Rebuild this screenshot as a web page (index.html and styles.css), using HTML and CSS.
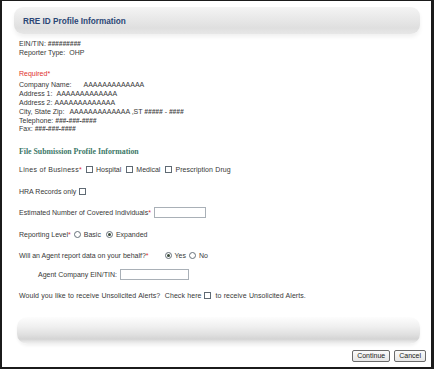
FILE: index.html
```html
<!DOCTYPE html>
<html>
<head>
<meta charset="utf-8">
<link rel="stylesheet" href="styles.css">
</head>
<body>
<div class="frame">
  <div class="hdr"><span class="hdr-title">RRE ID Profile Information</span></div>

  <div class="content">
    <div class="info">
      <div class="line">EIN/TIN: <span class="hash">#########</span></div>
      <div class="line">Reporter Type:<span class="val g3">OHP</span></div>
    </div>

    <div class="req">Required<span class="ast">*</span></div>
    <div class="info">
      <div class="line">Company Name:<span class="val g12">AAAAAAAAAAAAA</span></div>
      <div class="line">Address 1:<span class="val g3">AAAAAAAAAAAAA</span></div>
      <div class="line">Address 2:<span class="val g2">AAAAAAAAAAAAA</span></div>
      <div class="line">City, State Zip:<span class="val g4">AAAAAAAAAAAAA</span> ,ST <span class="hash">#####</span> - <span class="hash">####</span></div>
      <div class="line">Telephone:<span class="val g2 hash">###-###-####</span></div>
      <div class="line">Fax:<span class="val g2 hash">###-###-####</span></div>
    </div>

    <div class="sec-title">File Submission Profile Information</div>

    <div class="row r-lob">
      <span class="lob-label">Lines of Business<span class="ast">*</span></span>
      <span class="opt o4"><span class="cb"></span>Hospital</span>
      <span class="opt o5"><span class="cb"></span>Medical</span>
      <span class="opt o5"><span class="cb"></span><span class="wide">Prescription Drug</span></span>
    </div>

    <div class="row r-std">
      <span>HRA Records only</span>
      <span class="opt o3"><span class="cb"></span></span>
    </div>

    <div class="row r-std">
      <span>Estimated Number of Covered Individuals<span class="ast">*</span></span>
      <span class="tbox tb-est"></span>
    </div>

    <div class="row r-std">
      <span>Reporting Level<span class="ast">*</span></span>
      <span class="opt o3"><span class="rb"></span>Basic</span>
      <span class="opt o5"><span class="rb on"></span>Expanded</span>
    </div>

    <div class="row r-std">
      <span>Will an Agent report data on your behalf?<span class="ast">*</span></span>
      <span class="opt o16"><span class="rb on"></span>Yes</span>
      <span class="opt o3"><span class="rb"></span>No</span>
    </div>

    <div class="row r-agent">
      <span>Agent Company EIN/TIN:</span>
      <span class="tbox tb-agent"></span>
    </div>

    <div class="row r-alert">
      <span class="wide">Would you like to receive Unsolicited Alerts?&nbsp; Check here</span>
      <span class="opt o3"><span class="cb"></span></span>
      <span class="after wide">to receive Unsolicited Alerts.</span>
    </div>
  </div>

  <div class="foot-bar"></div>

  <div class="buttons">
    <span class="btn">Continue</span>
    <span class="btn">Cancel</span>
  </div>
</div>
</body>
</html>
```

FILE: styles.css
```css
html, body {
  margin: 0;
  padding: 0;
  background: #ffffff;
}

.frame {
  box-sizing: border-box;
  width: 434px;
  height: 369px;
  border-style: solid;
  border-color: #1b1b1b;
  border-width: 1px 3px 2px 2px;
  padding-top: 6px;
  font-family: "Liberation Sans", Arial, sans-serif;
  font-size: 7px;
  color: #383838;
  background: #fff;
  display: flex;
  flex-direction: column;
}

.hdr {
  height: 27px;
  margin: 0 11px 0 12px;
  border-radius: 9px;
  background: linear-gradient(to bottom, #f4f4f4 0%, #e8e8e8 45%, #dfdfdf 78%, #e7e7e7 100%);
  box-shadow: 0 3px 4px rgba(0, 0, 0, 0.06);
  display: flex;
  align-items: center;
  padding-left: 9px;
  padding-top: 1px;
  box-sizing: border-box;
}

.hdr-title {
  font-weight: bold;
  font-size: 8.2px;
  color: #2b4675;
}

.content {
  padding-left: 17px;
}

.info {
  margin-top: 6px;
}

.line {
  height: 8.8px;
  line-height: 8.8px;
  white-space: nowrap;
}

.val.g2 { margin-left: 2px; }
.val.g3 { margin-left: 4px; }
.val.g4 { margin-left: 5px; }
.val.g12 { margin-left: 12px; }

.hash {
  font-weight: bold;
  font-style: italic;
  font-size: 6.6px;
  color: #444;
}

.req {
  margin-top: 12px;
  height: 8.8px;
  line-height: 8.8px;
  color: #e0302c;
}

.req + .info {
  margin-top: 3px;
}

.ast {
  color: #e0302c;
}

.sec-title {
  margin-top: 13px;
  height: 10px;
  line-height: 10px;
  font-family: "Liberation Serif", "Times New Roman", serif;
  font-weight: bold;
  font-size: 7.8px;
  color: #3c7868;
}

.row {
  display: flex;
  align-items: center;
  height: 12px;
  white-space: nowrap;
}

.lob-label { letter-spacing: 0.3px; }
.wide { letter-spacing: 0.05px; word-spacing: 0.3px; }

.r-lob { margin-top: 6.5px; }
.r-std { margin-top: 9.5px; }
.r-agent { margin-top: 7px; padding-left: 19px; }
.r-alert { margin-top: 9px; }

.opt {
  display: inline-flex;
  align-items: center;
  gap: 3px;
}

.o3 { margin-left: 3px; }
.o4 { margin-left: 4px; }
.o5 { margin-left: 5px; }
.o16 { margin-left: 16px; }

.cb {
  box-sizing: border-box;
  display: inline-block;
  width: 7px;
  height: 7px;
  border: 1px solid #5f6a74;
  background: #fff;
}

.rb {
  box-sizing: border-box;
  display: inline-flex;
  align-items: center;
  justify-content: center;
  width: 7px;
  height: 7px;
  border: 1px solid #66707a;
  border-radius: 50%;
  background: #fff;
}

.rb.on::after {
  content: "";
  width: 3px;
  height: 3px;
  border-radius: 50%;
  background: #3a4a3a;
}

.tbox {
  box-sizing: border-box;
  display: inline-block;
  height: 11px;
  border: 1px solid #a9b0b7;
  background: #fff;
  margin-left: 3px;
}

.tb-est { width: 52px; }
.tb-agent { width: 69px; }

.after {
  margin-left: 4px;
}

.foot-bar {
  margin: 15px 11px 0 15px;
  height: 27px;
  border-radius: 10px;
  background: linear-gradient(to bottom, #fdfdfd 0%, #f0f0f0 35%, #e0e0e0 65%, #d4d4d4 82%, #e4e4e4 90%, #f3f3f3 100%);
  box-shadow: 0 2px 3px rgba(0, 0, 0, 0.05);
}

.buttons {
  display: flex;
  justify-content: flex-end;
  gap: 4px;
  margin-top: 6px;
  padding-right: 5px;
}

.btn {
  box-sizing: border-box;
  height: 12px;
  line-height: 10px;
  padding: 0 4px;
  border: 1px solid #6a6a6a;
  border-radius: 2px;
  background: linear-gradient(to bottom, #fbfbfb, #e6e6e6);
  color: #222;
  font-size: 7px;
}
```
